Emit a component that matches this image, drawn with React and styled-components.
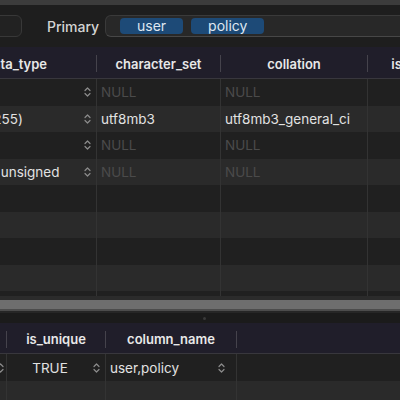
import React from "react";
import styled, { createGlobalStyle } from "styled-components";

const GlobalStyle = createGlobalStyle`
  html, body { margin: 0; padding: 0; background: #1e1e1e; }
  body { font-family: Inter, "Noto Sans", sans-serif; -webkit-font-smoothing: antialiased; }
`;

const Page = styled.div`
  width: 400px;
  height: 400px;
  overflow: hidden;
  display: flex;
  flex-direction: column;
  background: #1e1e1e;
`;

const TopStrip = styled.div`
  height: 5px;
  flex-shrink: 0;
  background: #3c3c3c;
`;

const Toolbar = styled.div`
  display: flex;
  align-items: center;
  height: 22px;
  margin: 10px 0 10px;
  flex-shrink: 0;
`;

const SearchBox = styled.div`
  width: 86px;
  height: 22px;
  margin-left: -64px;
  box-sizing: border-box;
  border: 1px solid #383838;
  border-radius: 6px;
  background: #222;
  flex-shrink: 0;
`;

const Label = styled.div`
  width: 83px;
  padding-left: 25px;
  box-sizing: border-box;
  font-size: 14px;
  font-weight: 500;
  color: #d4d4d4;
  flex-shrink: 0;
`;

const TokenField = styled.div`
  flex: 1;
  margin-right: -10px;
  height: 22px;
  box-sizing: border-box;
  border: 1px solid #3a3a3a;
  border-bottom-color: #474747;
  border-radius: 6px;
  background: #282828;
  display: flex;
  align-items: center;
  gap: 8px;
  padding-left: 14px;
`;

const Token = styled.span`
  height: 16px;
  line-height: 16px;
  padding: 0 17px;
  border-radius: 4px;
  background: #1d4a77;
  color: #dfe7f1;
  font-size: 14px;
`;

const Table = styled.div`
  display: flex;
  flex-direction: column;
  margin-left: ${(p) => p.$offset}px;
  flex-shrink: 0;
`;

const HeaderRow = styled.div`
  display: flex;
  align-items: center;
  height: ${(p) => p.$h}px;
  background: #201e2a;
  border-bottom: 1px solid #38373d;
`;

const HeadCell = styled.div`
  width: ${(p) => p.$w}px;
  flex-shrink: 0;
  height: 17px;
  margin-top: 2px;
  box-sizing: border-box;
  border-right: 1px solid #45434c;
  display: flex;
  align-items: center;
  justify-content: center;
  font-size: 13px;
  font-weight: 600;
  color: #e8e8e8;
  white-space: nowrap;
  overflow: hidden;
`;

const Row = styled.div`
  display: flex;
  height: ${(p) => p.$h}px;
  background: ${(p) => (p.$alt ? "#2a2a2a" : "#202020")};
`;

const Cell = styled.div`
  width: ${(p) => p.$w}px;
  flex-shrink: 0;
  box-sizing: border-box;
  border-right: 1px solid #333;
  display: flex;
  align-items: center;
  gap: 4px;
  padding: 0 ${(p) => p.$pr ?? 5}px 0 4px;
  font-size: 13.5px;
  color: #e2e2e2;
  white-space: nowrap;
  overflow: hidden;
`;

const CellText = styled.span`
  flex: 1;
  text-align: ${(p) => (p.$center ? "center" : "left")};
  color: ${(p) => (p.$muted ? "#4b4b4b" : "#e2e2e2")};
`;

const ScrollBar = styled.div`
  flex-shrink: 0;
  height: 17px;
  box-sizing: border-box;
  background: #2b2b2b;
  padding-top: 4px;
  border-bottom: 2px solid #262626;
  display: flex;
  flex-direction: column;
`;

const Thumb = styled.div`
  height: 9px;
  background: #6e6e6e;
  border-bottom: 2px solid #4c4c4c;
`;

const Splitter = styled.div`
  flex-shrink: 0;
  height: 10px;
  background: #1b1b1b;
  display: flex;
  align-items: center;
  justify-content: center;
`;

const Grip = styled.div`
  width: 3px;
  height: 3px;
  border-radius: 50%;
  margin-left: 9px;
  background: #3a3a3a;
`;

const Chevron = () => (
  <svg width="7" height="12" viewBox="0 0 7 12" style={{ flexShrink: 0 }}>
    <path d="M1 4.5 L3.5 2 L6 4.5 M1 7.5 L3.5 10 L6 7.5" fill="none" stroke="#8c8c8c" strokeWidth="1.2" strokeLinecap="round" strokeLinejoin="round" />
  </svg>
);

const upperCols = [
  { w: 161, title: "data_type" },
  { w: 124, title: "character_set" },
  { w: 147, title: "collation" },
  { w: 114, title: "is_nullable" },
];

const upperRows = [
  [{ t: "int", c: true }, { t: "NULL", m: true }, { t: "NULL", m: true }, {}],
  [{ t: "varchar(255)", c: true }, { t: "utf8mb3" }, { t: "utf8mb3_general_ci" }, {}],
  [{ t: "int", c: true }, { t: "NULL", m: true }, { t: "NULL", m: true }, {}],
  [{ t: "tinyint(3) unsigned", c: true }, { t: "NULL", m: true }, { t: "NULL", m: true }, {}],
  [{}, {}, {}, {}],
  [{}, {}, {}, {}],
  [{}, {}, {}, {}],
  [{}, {}, {}, {}],
];

const lowerCols = [
  { w: 101, title: "index_type" },
  { w: 99, title: "is_unique" },
  { w: 131, title: "column_name" },
  { w: 200, title: "" },
];

const lowerRows = [
  [{ t: "", c: true, pr: 2 }, { t: "TRUE", c: true, center: true }, { t: "user,policy", c: true, pr: 11 }, {}],
  [{}, {}, {}, {}],
];

const DataTable = ({ cols, rows, offset, headH, rowH, filler }) => (
  <Table $offset={offset}>
    <HeaderRow $h={headH}>
      {cols.map((c, i) => (
        <HeadCell key={i} $w={c.w}>{c.title}</HeadCell>
      ))}
    </HeaderRow>
    {rows.map((r, ri) => (
      <Row key={ri} $h={rowH} $alt={ri % 2 === 1}>
        {r.map((cell, ci) => (
          <Cell key={ci} $w={cols[ci].w} $pr={cell.pr}>
            <CellText $center={cell.center} $muted={cell.m}>{cell.t}</CellText>
            {cell.c && <Chevron />}
          </Cell>
        ))}
      </Row>
    ))}
    {filler ? (
      <Row $h={filler}>
        {cols.map((c, i) => (
          <Cell key={i} $w={c.w} />
        ))}
      </Row>
    ) : null}
  </Table>
);

export default function App() {
  return (
    <>
      <GlobalStyle />
      <Page>
        <TopStrip />
        <Toolbar>
          <SearchBox />
          <Label>Primary</Label>
          <TokenField>
            <Token>user</Token>
            <Token>policy</Token>
          </TokenField>
        </Toolbar>
        <DataTable cols={upperCols} rows={upperRows} offset={-64} headH={31} rowH={26.5} filler={5} />
        <ScrollBar>
          <Thumb />
        </ScrollBar>
        <Splitter>
          <Grip />
        </Splitter>
        <DataTable cols={lowerCols} rows={lowerRows} offset={-94} headH={30} rowH={27} />
      </Page>
    </>
  );
}
